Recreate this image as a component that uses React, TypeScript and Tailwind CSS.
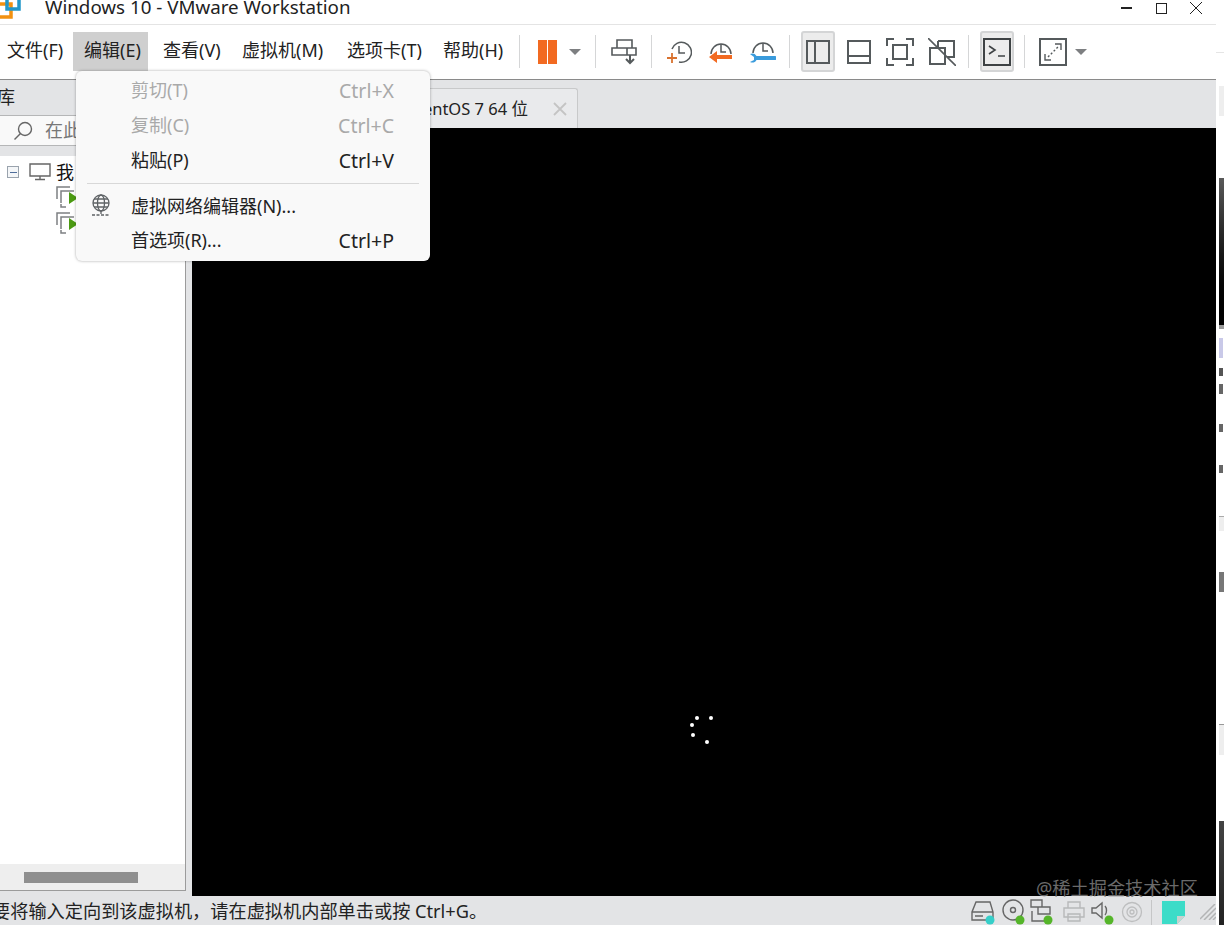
import React from "react";

const ff = "font-['Noto_Sans','Noto_Sans_CJK_SC',sans-serif]";
const G = "#555a5c";

function Sep({ ml }: { ml: string }) {
  return <div className={`h-[33px] w-px bg-[#d5d6d7] ${ml}`} />;
}
function Caret({ ml }: { ml: string }) {
  return <div className={`${ml} h-0 w-0 border-x-[6px] border-t-[6px] border-x-transparent border-t-[#7d7f81]`} />;
}

function Clock({ children }: { children?: React.ReactNode }) {
  return (
    <svg width="26" height="26" viewBox="0 0 26 26" fill="none" stroke={G} strokeWidth="1.5">
      {children}
    </svg>
  );
}

function Toolbar() {
  return (
    <div className="flex h-[54px] items-center bg-white pb-[1px]">
      <div className={`-mt-[1px] flex whitespace-nowrap text-[18px] text-[#222] ${ff}`}>
        <div className="flex h-[39px] w-[73px] items-center pb-[2px] pl-[7px]">文件(F)</div>
        <div className="flex h-[39px] w-[75px] items-center bg-[#cfcfcf] pb-[2px] pl-[11px]">编辑(E)</div>
        <div className="flex h-[39px] w-[83px] items-center pb-[2px] pl-[15px]">查看(V)</div>
        <div className="flex h-[39px] w-[104px] items-center pb-[2px] pl-[11px]">虚拟机(M)</div>
        <div className="flex h-[39px] w-[96px] items-center pb-[2px] pl-[12px]">选项卡(T)</div>
        <div className="flex h-[39px] w-[72px] items-center pb-[2px] pl-[12px]">帮助(H)</div>
      </div>
      <Sep ml="ml-[16px]" />
      <div className="ml-[18px] flex gap-[1.5px]">
        <div className="h-[24px] w-[8.5px] bg-[#f26a21]" />
        <div className="h-[24px] w-[8.5px] bg-[#f26a21]" />
      </div>
      <Caret ml="ml-[12px]" />
      <Sep ml="ml-[14px]" />
      <svg className="ml-[15px]" width="26" height="26" viewBox="0 0 26 26" fill="none" stroke={G} strokeWidth="1.6">
        <path d="M6 1h15v8H6zM1 9h15v7H1zM16 9h9v7h-9z" />
        <path d="M19 16v8M15 20l4 4 4-4" strokeWidth="2" />
      </svg>
      <Sep ml="ml-[14px]" />
      <div className="ml-[14px]">
        <Clock>
          <path d="M6 10a10 10 0 1 1 7 13" />
          <path d="M13 7v7h6" />
          <path d="M6 14v10M1 19h10" stroke="#d9722f" strokeWidth="1.8" />
        </Clock>
      </div>
      <div className="ml-[16px]">
        <Clock>
          <path d="M3 15a10 10 0 1 1 20 0" />
          <path d="M13 5v8h5" />
          <path d="M1 18l8-6v4h15v4H9v4z" fill="#f26a21" stroke="none" />
        </Clock>
      </div>
      <div className="ml-[16px]">
        <Clock>
          <path d="M3 14a10 10 0 1 1 20 0" />
          <path d="M13 4v8h5" />
          <path d="M0 15c2-1 5-1 6.500 2H25a2 2 0 0 1 0 4H6.500C5 24 2 24 0 23l4-2v-3z" fill="#3a9bdc" stroke="none" />
        </Clock>
      </div>
      <Sep ml="ml-[13px]" />
      <div className="ml-[11px] flex h-[41px] w-[34px] items-center justify-center rounded-[3px] border-2 border-[#d4d5d6] bg-[#ececec]">
        <svg width="24" height="24" viewBox="0 0 24 24" fill="none" stroke={G} strokeWidth="2">
          <path d="M1 1h22v22H1zM9 1v22" />
        </svg>
      </div>
      <svg className="ml-[12px]" width="24" height="24" viewBox="0 0 24 24" fill="none" stroke={G} strokeWidth="2">
        <path d="M1 1h22v22H1zM1 16h22" />
      </svg>
      <svg className="ml-[15px]" width="28" height="28" viewBox="0 0 28 28" fill="none" stroke={G} strokeWidth="2">
        <path d="M1 8V1h7M20 1h7v7M27 20v7h-7M8 27H1v-7" />
        <path d="M7 7h14v14H7z" />
      </svg>
      <svg className="ml-[14px]" width="28" height="28" viewBox="0 0 28 28" fill="none" stroke={G} strokeWidth="2">
        <path d="M10 3h16v16h-7M10 3v6M2 10h15v16H2z" />
        <path d="M0 0l28 28" strokeWidth="1.6" />
      </svg>
      <Sep ml="ml-[12px]" />
      <div className="ml-[11px] flex h-[41px] w-[34px] items-center justify-center rounded-[3px] border-2 border-[#d4d5d6] bg-[#ececec]">
        <svg width="28" height="28" viewBox="0 0 28 28" fill="none" stroke="#3e4244" strokeWidth="2">
          <path d="M1 1h26v26H1z" />
          <path d="M6 8l6 4-6 4M15 18h7" strokeWidth="1.6" />
        </svg>
      </div>
      <Sep ml="ml-[10px]" />
      <svg className="ml-[14px]" width="28" height="28" viewBox="0 0 28 28" fill="none" stroke={G} strokeWidth="2">
        <path d="M1 1h26v26H1z" />
        <path d="M9 19l10-10" strokeDasharray="2 2" strokeWidth="1.4" />
        <path d="M16 6h6v6M6 16v6h6" strokeWidth="1.4" />
      </svg>
      <Caret ml="ml-[8px]" />
    </div>
  );
}

function VmIcon() {
  return (
    <svg width="24" height="24" viewBox="0 0 24 24" fill="none">
      <path d="M1 13V1h13M5 17V5h13" stroke="#7d8082" strokeWidth="1.5" />
      <path d="M5 18v3h5" stroke="#7d8082" strokeWidth="1.5" />
      <path d="M13 6l9 6-9 6z" fill="#4b9a12" />
    </svg>
  );
}

function LeftPanel() {
  return (
    <div className="mb-[5px] flex w-[186px] flex-col border-r border-b border-[#9b9b9b]">
      <div className={`flex h-[35px] items-center bg-[#e3e4e6] text-[18px] text-[#222] ${ff}`}>
        <span className="-ml-[3px]">库</span>
      </div>
      <div className="flex h-[31px] items-center gap-[12px] border-y border-[#b5b6b7] bg-[#f9f9f9] pl-[13px]">
        <svg width="20" height="20" viewBox="0 0 20 20" fill="none" stroke="#666" strokeWidth="1.4">
          <circle cx="12" cy="8" r="6.5" />
          <path d="M7.5 12.5L1.5 18.5" />
        </svg>
        <span className={`text-[18px] text-[#777] ${ff}`}>在此</span>
      </div>
      <div className="h-[10px] bg-[#e3e4e6]" />
      <div className="flex flex-1 flex-col bg-white">
        <div className="flex flex-1 flex-col pt-[3px]">
          <div className={`flex h-[26px] items-center text-[18px] text-[#111] ${ff}`}>
            <div className="ml-[7px] flex h-[12px] w-[12px] items-center justify-center border border-[#9aa3ad] bg-[#f4f6f8]">
              <div className="h-px w-[7px] bg-[#4f6d9a]" />
            </div>
            <svg className="ml-[10px]" width="22" height="18" viewBox="0 0 22 18" fill="none" stroke="#666" strokeWidth="1.4">
              <path d="M1 1h20v12H1zM11 13v3M6 16.500h10" />
            </svg>
            <span className="ml-[5px]">我</span>
          </div>
          <div className="ml-[56px] flex h-[26px] items-center"><VmIcon /></div>
          <div className="ml-[56px] flex h-[26px] items-center"><VmIcon /></div>
        </div>
        <div className="flex h-[26px] items-center bg-[#eeeeee] pl-[24px]">
          <div className="h-[11px] w-[114px] bg-[#8f8f8f]" />
        </div>
      </div>
    </div>
  );
}

function Content() {
  return (
    <div className="flex min-h-0 flex-1 bg-[#e3e4e6]">
      <LeftPanel />
      <div className="ml-[6px] flex flex-1 flex-col">
        <div className="flex h-[48px] items-end pl-[179px]">
          <div className={`flex h-[40px] w-[207px] items-center justify-end rounded-t-[3px] border border-b-0 border-[#c8c9ca] bg-[#e9eaec] pr-[10px] pt-[2px] text-[16.500px] text-[#222] ${ff}`}>
            <span>CentOS 7 64 位</span>
            <svg className="ml-[25px] -mt-[2px]" width="14" height="14" viewBox="0 0 14 14" stroke="#c4c4c4" strokeWidth="1.8">
              <path d="M1 1l12 12M13 1L1 13" />
            </svg>
          </div>
        </div>
        <div className="relative flex-1 bg-black">
          <svg className="absolute left-[496px] top-[586px]" width="26" height="32" viewBox="0 0 26 32" fill="#fff">
            <circle cx="9" cy="4" r="2" />
            <circle cx="23" cy="4" r="2" />
            <circle cx="4" cy="11" r="2" />
            <circle cx="5" cy="21" r="2" />
            <circle cx="19" cy="28" r="2" />
          </svg>
        </div>
      </div>
    </div>
  );
}

function StatusBar() {
  const dot = (c: string, x: number, y: number) => <circle cx={x} cy={y} r="4.500" fill={c} stroke="none" />;
  return (
    <div className={`flex h-[29px] items-center bg-[#e3e4e6] pt-[3px] text-[18.2px] text-[#222] ${ff}`}>
      <span className="-ml-[8px] whitespace-nowrap">要将输入定向到该虚拟机，请在虚拟机内部单击或按 Ctrl+G。</span>
      <div className="ml-auto flex items-center">
        <svg width="28" height="26" viewBox="0 0 28 26" fill="none" stroke="#666" strokeWidth="1.4">
          <path d="M6 3h14l3 10v8H2v-8zM2 13h21M5 17h8" />
          {dot("#36cfc9", 20, 21)}
        </svg>
        <svg className="ml-[3px]" width="26" height="26" viewBox="0 0 26 26" fill="none" stroke="#666" strokeWidth="1.4">
          <circle cx="12" cy="11" r="10" />
          <circle cx="12" cy="11" r="2.500" />
          {dot("#55b52a", 19, 21)}
        </svg>
        <svg className="ml-[3px]" width="26" height="26" viewBox="0 0 26 26" fill="none" stroke="#666" strokeWidth="1.4">
          <path d="M1 1h11v7H1zM8 8h12v7H8zM2 12v10h14" />
          {dot("#55b52a", 18, 21)}
        </svg>
        <svg className="ml-[6px]" width="24" height="24" viewBox="0 0 24 24" fill="none" stroke="#b7b8b9" strokeWidth="1.4">
          <path d="M6 8V2h12v6M2 8h20v9H2zM6 14h12v7H6z" />
        </svg>
        <svg className="ml-[5px]" width="26" height="26" viewBox="0 0 26 26" fill="none" stroke="#666" strokeWidth="1.4">
          <path d="M1 9h4l6-5v15l-6-5H1zM14 7c2 2 2 7 0 9" />
          {dot("#55b52a", 18, 21)}
        </svg>
        <svg className="ml-[4px]" width="22" height="22" viewBox="0 0 22 22" fill="none" stroke="#bdbebf" strokeWidth="1.300">
          <circle cx="11" cy="11" r="9.500" />
          <circle cx="11" cy="11" r="5" />
          <circle cx="11" cy="11" r="2" />
        </svg>
        <div className="ml-[8px] h-[25px] w-px bg-[#c5c6c7]" />
        <svg className="ml-[10px]" width="23" height="23" viewBox="0 0 23 23">
          <path d="M0 0h23v15l-8 8H0z" fill="#3cdcc8" />
          <path d="M23 15l-8 8v-8z" fill="#c9d2cf" />
        </svg>
        <svg className="ml-[15px]" width="16" height="16" viewBox="0 0 16 16" stroke="#b3b4b5" strokeWidth="1.500">
          <path d="M0 15L15 0M4 16L16 4M9 16l7-7M13 16l3-3" />
        </svg>
      </div>
    </div>
  );
}

function RightStrip() {
  return (
    <div className="flex w-[8px] flex-col bg-white">
      <div className="h-[52px]" />
      <div className="h-px bg-[#e5e5e5]" />
      <div className="h-[33px]" />
      <div className="ml-[3px] h-[30px] bg-[#eeeeee]" />
      <div className="h-[62px]" />
      <div className="ml-[3px] h-[147px] bg-gradient-to-b from-[#5a5a5a] via-[#1a1a1a] to-black" />
      <div className="ml-[3px] h-[4px] bg-[#999]" />
      <div className="ml-[3px] mt-[9px] h-[20px] w-[4px] bg-[#c9c9e8]" />
      <div className="ml-[3px] mt-[10px] h-[8px] w-[4px] bg-[#555]" />
      <div className="ml-[3px] mt-[8px] h-[10px] w-[4px] bg-[#666]" />
      <div className="ml-[3px] mt-[30px] h-[8px] w-[4px] bg-[#666]" />
      <div className="ml-[3px] mt-[33px] h-[8px] w-[4px] bg-[#666]" />
      <div className="ml-[3px] mt-[43px] h-px bg-[#aaa]" />
      <div className="ml-[3px] h-[14px] bg-[#eeeeee]" />
      <div className="ml-[3px] mt-[41px] h-[20px] w-[5px] bg-[#777]" />
      <div className="h-[132px]" />
      <div className="ml-[3px] h-px bg-[#999]" />
      <div className="ml-[3px] h-[30px] bg-[#eeeeee]" />
      <div className="h-[66px]" />
      <div className="ml-[3px] flex-1 bg-gradient-to-b from-[#444] to-[#222]" />
    </div>
  );
}

function EditMenu() {
  const Row = ({ label, key2, off, h34 }: { label: string; key2?: string; off?: boolean; h34?: boolean }) => (
    <div className={`flex items-center pl-[55px] pr-[36px] ${h34 ? "h-[33px]" : "h-[35px]"} ${off ? "text-[#a9a9a9]" : "text-[#222]"}`}>
      <span>{label}</span>
      {key2 && <span className="ml-auto text-[19.5px]">{key2}</span>}
    </div>
  );
  return (
    <div className={`absolute left-[76px] top-[71px] h-[190px] w-[354px] rounded-[6px] bg-[#f9f9f9] pt-[2px] text-[18px] shadow-[0_0_3px_rgba(0,0,0,0.35)] ${ff}`}>
      <Row label="剪切(T)" key2="Ctrl+X" off />
      <Row label="复制(C)" key2="Ctrl+C" off />
      <Row label="粘贴(P)" key2="Ctrl+V" />
      <div className="mx-[11px] mt-[5px] mb-[5px] h-px bg-[#d8d8d8]" />
      <div className="relative">
        <svg className="absolute left-[15px] top-[5px]" width="20" height="24" viewBox="0 0 20 24" fill="none" stroke="#5f6366" strokeWidth="1.300">
          <circle cx="10" cy="9" r="8" />
          <ellipse cx="10" cy="9" rx="3.500" ry="8" />
          <path d="M2 9h16M3 5h14M3 13h14M10 17v3" />
          <path d="M1 21h18" strokeDasharray="3 1.500" />
        </svg>
        <Row label="虚拟网络编辑器(N)..." />
      </div>
      <Row label="首选项(R)..." key2="Ctrl+P" h34 />
    </div>
  );
}

export default function App() {
  return (
    <div className="relative flex h-[925px] w-[1224px] overflow-hidden bg-white">
      <div className="flex w-[1216px] flex-col">
        <div className="flex h-[25px] items-center border-b border-[#e4e4e4] bg-white">
          <svg className="-mt-[8px]" width="21" height="24" viewBox="0 0 21 24" fill="none" strokeWidth="3.500">
            <path d="M-2 8h13v13H-2z" stroke="#f29111" />
            <path d="M7 0h12v13H7z" stroke="#2196c9" />
          </svg>
          <span className={`ml-[24px] -mt-[9px] text-[18.75px] text-[#222] ${ff}`}>Windows 10 - VMware Workstation</span>
          <div className="ml-auto -mt-[8px] flex items-center">
            <div className="h-[1.500px] w-[11px] bg-[#222]" />
            <div className="ml-[24px] h-[11px] w-[11px] border border-[#222]" />
            <svg className="ml-[23px] mr-[14px]" width="12" height="12" viewBox="0 0 12 12" stroke="#222" strokeWidth="1">
              <path d="M0 0l12 12M12 0L0 12" />
            </svg>
          </div>
        </div>
        <Toolbar />
        <div className="h-[1px] bg-[#8a8a8a]" />
        <Content />
        <StatusBar />
      </div>
      <RightStrip />
      <EditMenu />
      <div className={`absolute left-[1036px] top-[875px] text-[18.2px] text-[#6a6a6a] ${ff}`}>@稀土掘金技术社区</div>
    </div>
  );
}
